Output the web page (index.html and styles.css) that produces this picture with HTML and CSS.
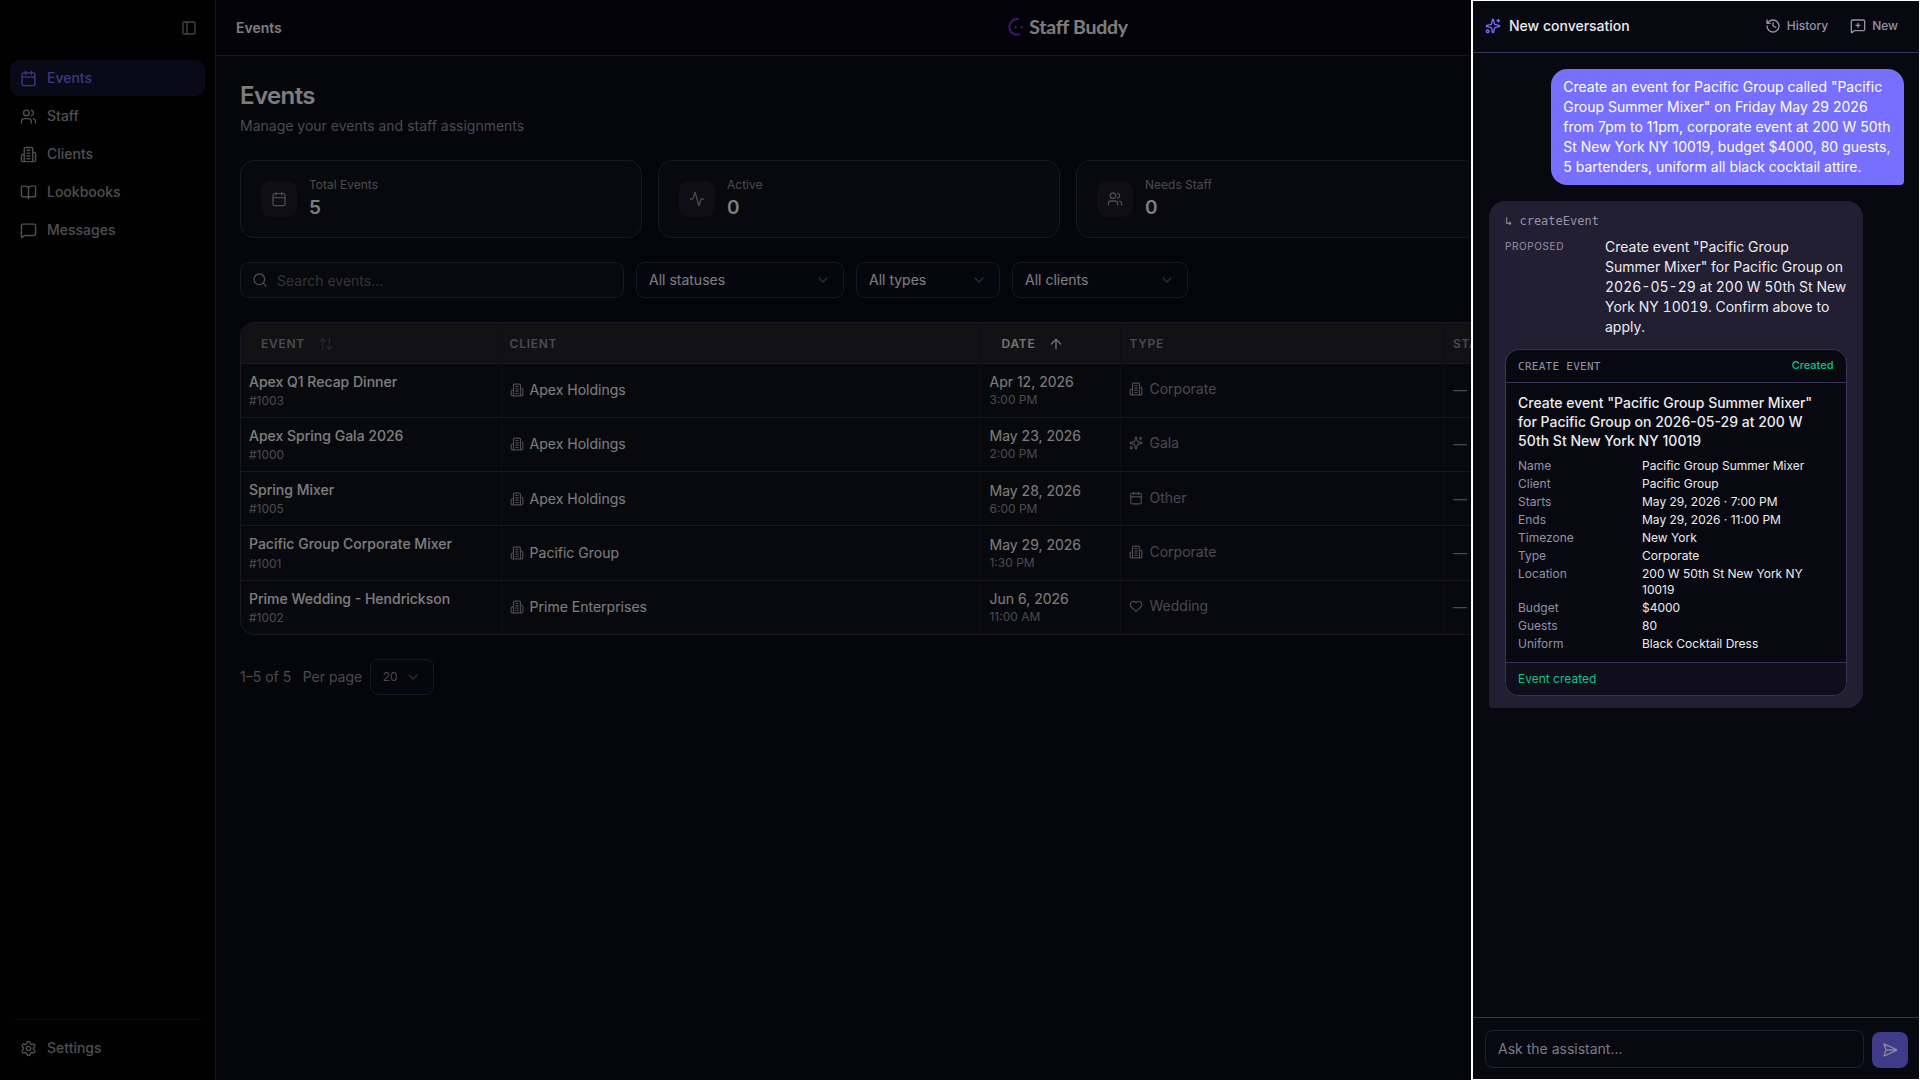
FILE: index.html
```html
<!DOCTYPE html>
<html lang="en">
  <head>
    <meta charset="UTF-8" />
    <meta name="viewport" content="width=device-width, initial-scale=1.0" />
    <title>Events - Staff Buddy</title>
    <link rel="stylesheet" href="styles.css">
  </head>
  <body>
    <!-- Icon sprite -->
    <svg class="sprite" xmlns="http://www.w3.org/2000/svg">
      <symbol id="calendar" viewBox="0 0 24 24"><path d="M8 2v4M16 2v4M3 10h18" /><rect width="18" height="18" x="3" y="4" rx="2" /></symbol>
      <symbol id="users" viewBox="0 0 24 24"><path d="M16 21v-2a4 4 0 0 0-4-4H6a4 4 0 0 0-4 4v2M16 3.128a4 4 0 0 1 0 7.744M22 21v-2a4 4 0 0 0-3-3.87" /><circle cx="9" cy="7" r="4" /></symbol>
      <symbol id="building" viewBox="0 0 24 24"><path d="M6 22V4a2 2 0 0 1 2-2h8a2 2 0 0 1 2 2v18ZM6 12H4a2 2 0 0 0-2 2v6a2 2 0 0 0 2 2h2M18 9h2a2 2 0 0 1 2 2v9a2 2 0 0 1-2 2h-2M10 6h4M10 10h4M10 14h4M10 18h4" /></symbol>
      <symbol id="book" viewBox="0 0 24 24"><path d="M12 7v14M3 18a1 1 0 0 1-1-1V4a1 1 0 0 1 1-1h5a4 4 0 0 1 4 4 4 4 0 0 1 4-4h5a1 1 0 0 1 1 1v13a1 1 0 0 1-1 1h-6a3 3 0 0 0-3 3 3 3 0 0 0-3-3z" /></symbol>
      <symbol id="message" viewBox="0 0 24 24"><path d="M22 17a2 2 0 0 1-2 2H6.828a2 2 0 0 0-1.414.586l-2.202 2.202A.71.71 0 0 1 2 21.286V5a2 2 0 0 1 2-2h16a2 2 0 0 1 2 2z" /></symbol>
      <symbol id="message-plus" viewBox="0 0 24 24"><path d="M22 17a2 2 0 0 1-2 2H6.828a2 2 0 0 0-1.414.586l-2.202 2.202A.71.71 0 0 1 2 21.286V5a2 2 0 0 1 2-2h16a2 2 0 0 1 2 2zM12 8v6M9 11h6" /></symbol>
      <symbol id="settings" viewBox="0 0 24 24"><path d="M9.671 4.136a2.34 2.34 0 0 1 4.659 0 2.34 2.34 0 0 0 3.319 1.915 2.34 2.34 0 0 1 2.33 4.033 2.34 2.34 0 0 0 0 3.831 2.34 2.34 0 0 1-2.33 4.033 2.34 2.34 0 0 0-3.319 1.915 2.34 2.34 0 0 1-4.659 0 2.34 2.34 0 0 0-3.32-1.915 2.34 2.34 0 0 1-2.33-4.033 2.34 2.34 0 0 0 0-3.831A2.34 2.34 0 0 1 6.35 6.051a2.34 2.34 0 0 0 3.319-1.915" /><circle cx="12" cy="12" r="3" /></symbol>
      <symbol id="panel" viewBox="0 0 24 24"><rect width="18" height="18" x="3" y="3" rx="2" /><path d="M9 3v18" /></symbol>
      <symbol id="activity" viewBox="0 0 24 24"><path d="M22 12h-2.48a2 2 0 0 0-1.93 1.46l-2.35 8.36a.25.25 0 0 1-.48 0L9.24 2.18a.25.25 0 0 0-.48 0l-2.35 8.36A2 2 0 0 1 4.49 12H2" /></symbol>
      <symbol id="search" viewBox="0 0 24 24"><path d="m21 21-4.34-4.34" /><circle cx="11" cy="11" r="8" /></symbol>
      <symbol id="chevron" viewBox="0 0 24 24"><path d="m6 9 6 6 6-6" /></symbol>
      <symbol id="sort" viewBox="0 0 24 24"><path d="m21 16-4 4-4-4M17 20V4M3 8l4-4 4 4M7 4v16" /></symbol>
      <symbol id="arrow-up" viewBox="0 0 24 24"><path d="m5 12 7-7 7 7M12 19V5" /></symbol>
      <symbol id="sparkles" viewBox="0 0 24 24"><path d="M11.017 2.814a1 1 0 0 1 1.966 0l1.051 5.558a2 2 0 0 0 1.594 1.594l5.558 1.051a1 1 0 0 1 0 1.966l-5.558 1.051a2 2 0 0 0-1.594 1.594l-1.051 5.558a1 1 0 0 1-1.966 0l-1.051-5.558a2 2 0 0 0-1.594-1.594l-5.558-1.051a1 1 0 0 1 0-1.966l5.558-1.051a2 2 0 0 0 1.594-1.594zM20 2v4M22 4h-4" /><circle cx="4" cy="20" r="2" /></symbol>
      <symbol id="heart" viewBox="0 0 24 24"><path d="M2 9.5a5.5 5.5 0 0 1 9.591-3.676.56.56 0 0 0 .818 0A5.49 5.49 0 0 1 22 9.5c0 2.29-1.5 4-3 5.5l-5.492 5.313a2 2 0 0 1-3 .019L5 15c-1.5-1.5-3-3.2-3-5.5" /></symbol>
      <symbol id="history" viewBox="0 0 24 24"><path d="M3 12a9 9 0 1 0 9-9 9.75 9.75 0 0 0-6.74 2.74L3 8M3 3v5h5M12 7v5l4 2" /></symbol>
      <symbol id="send" viewBox="0 0 24 24"><path d="M3.714 3.048a.498.498 0 0 0-.683.627l2.843 7.627a2 2 0 0 1 0 1.396l-2.842 7.627a.498.498 0 0 0 .682.627l18-8.5a.5.5 0 0 0 0-.904zM6 12h16" /></symbol>
    </svg>

    <div class="app">
      <aside class="sidebar">
        <div class="sidebar-top">
          <svg class="icon"><use href="#panel" /></svg>
        </div>
        <nav class="nav">
          <a class="nav-item active"><svg class="icon"><use href="#calendar" /></svg>Events</a>
          <a class="nav-item"><svg class="icon"><use href="#users" /></svg>Staff</a>
          <a class="nav-item"><svg class="icon"><use href="#building" /></svg>Clients</a>
          <a class="nav-item"><svg class="icon"><use href="#book" /></svg>Lookbooks</a>
          <a class="nav-item"><svg class="icon"><use href="#message" /></svg>Messages</a>
        </nav>
        <div class="sidebar-bottom">
          <a class="nav-item"><svg class="icon"><use href="#settings" /></svg>Settings</a>
        </div>
      </aside>

      <div class="page">
        <header class="topbar">
          <div class="topbar-title">Events</div>
          <div class="logo">
            <svg class="logo-mark" viewBox="0 0 16 18">
              <path d="M10.8 1.3A7.8 7.8 0 1 0 12.2 16.1" />
              <circle cx="7.6" cy="9.3" r="1.2" />
              <circle cx="13.8" cy="9.3" r="1.2" />
            </svg>
            <span class="logo-text">Staff Buddy</span>
          </div>
          <div class="topbar-side"></div>
        </header>

        <main class="content">
          <h1>Events</h1>
          <p class="subtitle">Manage your events and staff assignments</p>

          <div class="stats">
            <div class="stat">
              <div class="stat-icon"><svg class="icon"><use href="#calendar" /></svg></div>
              <div>
                <div class="stat-label">Total Events</div>
                <div class="stat-value">5</div>
              </div>
            </div>
            <div class="stat">
              <div class="stat-icon"><svg class="icon"><use href="#activity" /></svg></div>
              <div>
                <div class="stat-label">Active</div>
                <div class="stat-value">0</div>
              </div>
            </div>
            <div class="stat">
              <div class="stat-icon"><svg class="icon"><use href="#users" /></svg></div>
              <div>
                <div class="stat-label">Needs Staff</div>
                <div class="stat-value">0</div>
              </div>
            </div>
          </div>

          <div class="filters">
            <div class="search"><svg class="icon"><use href="#search" /></svg><span>Search events...</span></div>
            <div class="select select-status"><span>All statuses</span><svg class="icon"><use href="#chevron" /></svg></div>
            <div class="select select-type"><span>All types</span><svg class="icon"><use href="#chevron" /></svg></div>
            <div class="select select-client"><span>All clients</span><svg class="icon"><use href="#chevron" /></svg></div>
          </div>

          <div class="table">
            <div class="row head">
              <div class="cell sortable">EVENT<svg class="icon"><use href="#sort" /></svg></div>
              <div class="cell">CLIENT</div>
              <div class="cell sortable sorted">DATE<svg class="icon"><use href="#arrow-up" /></svg></div>
              <div class="cell">TYPE</div>
              <div class="cell">STATUS</div>
            </div>
            <div class="row">
              <div class="cell"><div><div class="name">Apex Q1 Recap Dinner</div><div class="number">#1003</div></div></div>
              <div class="cell client"><svg class="icon"><use href="#building" /></svg>Apex Holdings</div>
              <div class="cell"><div><div class="date">Apr 12, 2026</div><div class="time">3:00 PM</div></div></div>
              <div class="cell type"><svg class="icon"><use href="#building" /></svg>Corporate</div>
              <div class="cell none">—</div>
            </div>
            <div class="row">
              <div class="cell"><div><div class="name">Apex Spring Gala 2026</div><div class="number">#1000</div></div></div>
              <div class="cell client"><svg class="icon"><use href="#building" /></svg>Apex Holdings</div>
              <div class="cell"><div><div class="date">May 23, 2026</div><div class="time">2:00 PM</div></div></div>
              <div class="cell type"><svg class="icon"><use href="#sparkles" /></svg>Gala</div>
              <div class="cell none">—</div>
            </div>
            <div class="row">
              <div class="cell"><div><div class="name">Spring Mixer</div><div class="number">#1005</div></div></div>
              <div class="cell client"><svg class="icon"><use href="#building" /></svg>Apex Holdings</div>
              <div class="cell"><div><div class="date">May 28, 2026</div><div class="time">6:00 PM</div></div></div>
              <div class="cell type"><svg class="icon"><use href="#calendar" /></svg>Other</div>
              <div class="cell none">—</div>
            </div>
            <div class="row">
              <div class="cell"><div><div class="name">Pacific Group Corporate Mixer</div><div class="number">#1001</div></div></div>
              <div class="cell client"><svg class="icon"><use href="#building" /></svg>Pacific Group</div>
              <div class="cell"><div><div class="date">May 29, 2026</div><div class="time">1:30 PM</div></div></div>
              <div class="cell type"><svg class="icon"><use href="#building" /></svg>Corporate</div>
              <div class="cell none">—</div>
            </div>
            <div class="row">
              <div class="cell"><div><div class="name">Prime Wedding - Hendrickson</div><div class="number">#1002</div></div></div>
              <div class="cell client"><svg class="icon"><use href="#building" /></svg>Prime Enterprises</div>
              <div class="cell"><div><div class="date">Jun 6, 2026</div><div class="time">11:00 AM</div></div></div>
              <div class="cell type"><svg class="icon"><use href="#heart" /></svg>Wedding</div>
              <div class="cell none">—</div>
            </div>
          </div>

          <div class="pagination">
            <span class="range">1–5 of 5</span>
            <span class="per-page">Per page</span>
            <div class="select select-size"><span>20</span><svg class="icon"><use href="#chevron" /></svg></div>
          </div>
        </main>
      </div>
    </div>

    <div class="overlay"></div>

    <section class="assistant">
      <header class="assistant-header">
        <svg class="icon sparkle"><use href="#sparkles" /></svg>
        <h2>New conversation</h2>
        <button class="ghost"><svg class="icon"><use href="#history" /></svg>History</button>
        <button class="ghost"><svg class="icon"><use href="#message-plus" /></svg>New</button>
      </header>

      <div class="messages">
        <div class="bubble user">Create an event for Pacific Group called "Pacific Group Summer Mixer" on Friday May 29 2026 from 7pm to 11pm, corporate event at 200 W 50th St New York NY 10019, budget $4000, 80 guests, 5 bartenders, uniform all black cocktail attire.</div>

        <div class="bubble tool">
          <div class="tool-name">↳ createEvent</div>
          <div class="tool-row">
            <div class="tool-key">PROPOSED</div>
            <div class="tool-text">Create event "Pacific Group Summer Mixer" for Pacific Group on 2026-05-29 at 200 W 50th St New York NY 10019. Confirm above to apply.</div>
          </div>

          <div class="card">
            <div class="card-header">
              <span class="card-kind">CREATE EVENT</span>
              <span class="card-state">Created</span>
            </div>
            <div class="card-body">
              <h3>Create event "Pacific Group Summer Mixer" for Pacific Group on 2026-05-29 at 200 W 50th St New York NY 10019</h3>
              <dl class="details">
                <dt>Name</dt><dd>Pacific Group Summer Mixer</dd>
                <dt>Client</dt><dd>Pacific Group</dd>
                <dt>Starts</dt><dd>May 29, 2026 · 7:00 PM</dd>
                <dt>Ends</dt><dd>May 29, 2026 · 11:00 PM</dd>
                <dt>Timezone</dt><dd>New York</dd>
                <dt>Type</dt><dd>Corporate</dd>
                <dt>Location</dt><dd>200 W 50th St New York NY 10019</dd>
                <dt>Budget</dt><dd>$4000</dd>
                <dt>Guests</dt><dd>80</dd>
                <dt>Uniform</dt><dd>Black Cocktail Dress</dd>
              </dl>
            </div>
            <div class="card-footer">Event created</div>
          </div>
        </div>
      </div>

      <footer class="composer">
        <div class="composer-input">Ask the assistant...</div>
        <button class="send"><svg class="icon"><use href="#send" /></svg></button>
      </footer>
    </section>
  </body>
</html>
```

FILE: styles.css
```css
* {
  box-sizing: border-box;
}

body {
  margin: 0;
  height: 100vh;
  overflow: hidden;
  background: #0a0c15;
  color: #fafafa;
  font-family: Inter, sans-serif;
  font-size: 14px;
  line-height: 20px;
}

h1, h2, h3, p, dl, dd {
  margin: 0;
}

button {
  border: none;
  background: none;
  font: inherit;
}

.sprite {
  display: none;
}

.icon {
  width: 16px;
  height: 16px;
  flex: none;
  fill: none;
  stroke: currentColor;
  stroke-width: 2;
  stroke-linecap: round;
  stroke-linejoin: round;
}

.app {
  display: flex;
  height: 100vh;
}

/* Sidebar */
.sidebar {
  width: 216px;
  flex: none;
  display: flex;
  flex-direction: column;
  background: #030305;
  border-right: 1px solid #302f47;
  color: #9c9ca0;
}

.sidebar-top {
  display: flex;
  justify-content: flex-end;
  padding: 20px 18px 24px;
  color: #85858a;
}

.nav {
  display: flex;
  flex-direction: column;
  gap: 2px;
  padding: 0 10px;
}

.nav-item {
  display: flex;
  align-items: center;
  gap: 10px;
  height: 36px;
  padding: 0 10px;
  border-radius: 10px;
  font-weight: 500;
}

.nav-item .icon {
  width: 17px;
  height: 17px;
}

.nav-item.active {
  background: #151330;
  color: #766fff;
}

.sidebar-bottom {
  margin: auto 12px 14px;
  padding-top: 10px;
  border-top: 1px solid #121216;
}

.sidebar-bottom .nav-item {
  padding: 0 8px;
}

/* Top bar */
.page {
  flex: 1;
  min-width: 0;
}

.topbar {
  display: flex;
  align-items: center;
  height: 56px;
  padding: 0 20px;
  background: #070410;
  border-bottom: 1px solid #302f47;
}

.topbar-title,
.topbar-side {
  flex: 1;
  font-weight: 600;
}

.logo {
  display: flex;
  align-items: center;
  gap: 5px;
  padding-bottom: 1px;
}

.logo-mark {
  width: 16px;
  height: 18px;
  fill: #7c2ae8;
}

.logo-mark path {
  fill: none;
  stroke: #7c2ae8;
  stroke-width: 2;
}

.logo-text {
  padding-bottom: 1px;
  font-family: Lato, sans-serif;
  font-size: 19.5px;
  font-weight: 700;
  letter-spacing: -0.3px;
}

/* Page content */
.content {
  padding: 24px;
}

h1 {
  font-size: 24px;
  line-height: 32px;
  font-weight: 600;
  letter-spacing: -0.025em;
}

.subtitle {
  margin-top: 4px;
  color: #94939f;
}

.stats {
  display: grid;
  grid-template-columns: repeat(4, 1fr);
  gap: 16px;
  margin-top: 24px;
}

.stat {
  display: flex;
  align-items: center;
  gap: 12px;
  padding: 16px 20px;
  border: 1px solid #302f47;
  border-radius: 14px;
  background: #101219;
}

.stat-icon {
  display: flex;
  align-items: center;
  justify-content: center;
  width: 36px;
  height: 36px;
  border-radius: 10px;
  background: #1e1a2b;
  color: #94939f;
}

.stat-label {
  font-size: 12px;
  line-height: 16px;
  color: #94939f;
}

.stat-value {
  padding-top: 2px;
  font-size: 19px;
  line-height: 26px;
  font-weight: 600;
}

.filters {
  display: flex;
  gap: 12px;
  margin-top: 24px;
}

.search {
  display: flex;
  align-items: center;
  gap: 9px;
  width: 384px;
  height: 36px;
  padding: 0 11px;
  border: 1px solid #302f47;
  border-radius: 8px;
  background: #101219;
  color: #94939f;
}

.search span {
  padding-top: 1px;
  color: #666672;
}

.select {
  display: flex;
  align-items: center;
  justify-content: space-between;
  height: 36px;
  padding: 0 12px;
  border: 1px solid #302f47;
  border-radius: 8px;
  background: #0d0c1c;
}

.select .icon {
  color: #5d5b6b;
}

.select-status {
  width: 208px;
}

.select-type {
  width: 144px;
}

.select-client {
  width: 176px;
}

/* Table */
.table {
  margin-top: 24px;
  border: 1px solid #302f47;
  border-radius: 14px;
  background: #101219;
  overflow: hidden;
}

.row {
  display: grid;
  grid-template-columns: 260.6px 479.9px 140px 323.5px 1fr;
  height: 54.25px;
  border-bottom: 1px solid #302f47;
}

.row:last-child {
  height: 53.5px;
  border-bottom: none;
}

.cell {
  display: flex;
  align-items: center;
  padding: 0 8px;
  border-right: 1px solid #1b1b26;
}

.head {
  height: 40.5px;
  background: #24252a;
  color: #94939f;
  font-size: 12px;
  font-weight: 600;
  letter-spacing: 0.06em;
}

.head .cell {
  padding-top: 2px;
}

.head .sortable {
  gap: 13px;
  padding-left: 20px;
}

.sortable .icon {
  color: #4c4c55;
}

.sorted,
.sorted .icon {
  color: #e4e4e8;
}

.name {
  line-height: 19.25px;
  font-weight: 500;
}

.number {
  margin-top: 2px;
  font-size: 12px;
  line-height: 16px;
  color: #94939f;
}

.time {
  font-size: 12px;
  line-height: 16px;
  color: #94939f;
}

.client,
.type {
  gap: 6px;
}

.client .icon,
.type .icon {
  width: 14px;
  height: 14px;
}

.client .icon {
  color: #94939f;
}

.type {
  padding-bottom: 2px;
  color: #94939f;
}

.none {
  color: #94939f;
}

.pagination {
  display: flex;
  align-items: center;
  margin-top: 24px;
  color: #94939f;
}

.per-page {
  margin: 0 7.5px 0 11.5px;
}

.select-size {
  width: 64px;
  font-size: 12px;
}

.select-size span {
  width: 14px;
  overflow: hidden;
}

.overlay {
  position: fixed;
  inset: 0;
  background: rgba(0, 0, 0, 0.5);
}

/* Assistant drawer */
.assistant {
  position: fixed;
  top: 0;
  right: 0;
  bottom: 0;
  width: 448px;
  display: flex;
  flex-direction: column;
  border-left: 1px solid #38345a;
  background: #080811;
  color: #ebebee;
  outline: 2px solid #fff;
  outline-offset: -1px;
}

.assistant-header {
  display: flex;
  align-items: center;
  height: 53px;
  padding: 0 12px;
  border-bottom: 1px solid #38345a;
}

.sparkle {
  color: #766fff;
}

h2 {
  flex: 1;
  margin-left: 8px;
  font-size: 14px;
  line-height: 20px;
  font-weight: 500;
}

.ghost {
  display: flex;
  align-items: center;
  gap: 6px;
  padding: 0 10px;
  font-size: 12px;
  font-weight: 500;
  color: #9591a8;
}

.ghost + .ghost {
  margin-left: 2px;
}

.messages {
  flex: 1;
  display: flex;
  flex-direction: column;
  gap: 16px;
  padding: 16px;
}

.bubble {
  border-radius: 16px;
}

.user {
  align-self: flex-end;
  max-width: 85%;
  padding: 8px 12px;
  border-bottom-right-radius: 4px;
  background: #766fff;
  color: #fff;
}

.tool {
  align-self: flex-start;
  width: 90%;
  padding: 12px 16px;
  border-bottom-left-radius: 4px;
  background: #231f33;
}

.tool-name {
  font-family: "DejaVu Sans Mono", monospace;
  font-size: 12px;
  line-height: 16px;
  color: #9591a8;
}

.tool-row {
  display: grid;
  grid-template-columns: 88px 1fr;
  gap: 12px;
  margin-top: 8px;
}

.tool-key {
  font-size: 10px;
  line-height: 18px;
  letter-spacing: 0.06em;
  color: #9591a8;
}

.tool-text {
  font-variant-numeric: tabular-nums;
}

.card {
  margin-top: 12px;
  border: 1px solid #38345a;
  border-radius: 14px;
  background: #080811;
  overflow: hidden;
}

.card-header {
  display: flex;
  justify-content: space-between;
  height: 33px;
  padding: 7px 12px;
  border-bottom: 1px solid #38345a;
  font-size: 11px;
  line-height: 16px;
}

.card-kind {
  padding-top: 2px;
  font-family: "DejaVu Sans Mono", monospace;
  letter-spacing: 0.025em;
  color: #9591a8;
}

.card-state {
  font-weight: 500;
  color: #00c989;
}

.card-body {
  padding: 11px 12px 10px;
}

h3 {
  font-size: 14px;
  line-height: 18.9px;
  font-weight: 500;
}

.details {
  display: grid;
  grid-template-columns: 112px 1fr;
  gap: 2px 12px;
  margin-top: 7px;
  font-size: 12px;
  line-height: 16px;
}

.details dt {
  color: #9591a8;
}

.card-footer {
  padding: 8px 12px;
  border-top: 1px solid #38345a;
  background: #100e1b;
  font-size: 12px;
  line-height: 16px;
  color: #00c989;
}

.composer {
  display: flex;
  align-items: flex-end;
  gap: 8px;
  padding: 12px;
  border-top: 1px solid #38345a;
}

.composer-input {
  flex: 1;
  height: 38px;
  padding: 8px 12px;
  border: 1px solid #231f33;
  border-radius: 8px;
  color: #7c7c84;
}

.send {
  display: flex;
  align-items: center;
  justify-content: center;
  width: 36px;
  height: 36px;
  padding: 0;
  border-radius: 8px;
  background: #3f3b88;
  color: #8a87a8;
}
```
